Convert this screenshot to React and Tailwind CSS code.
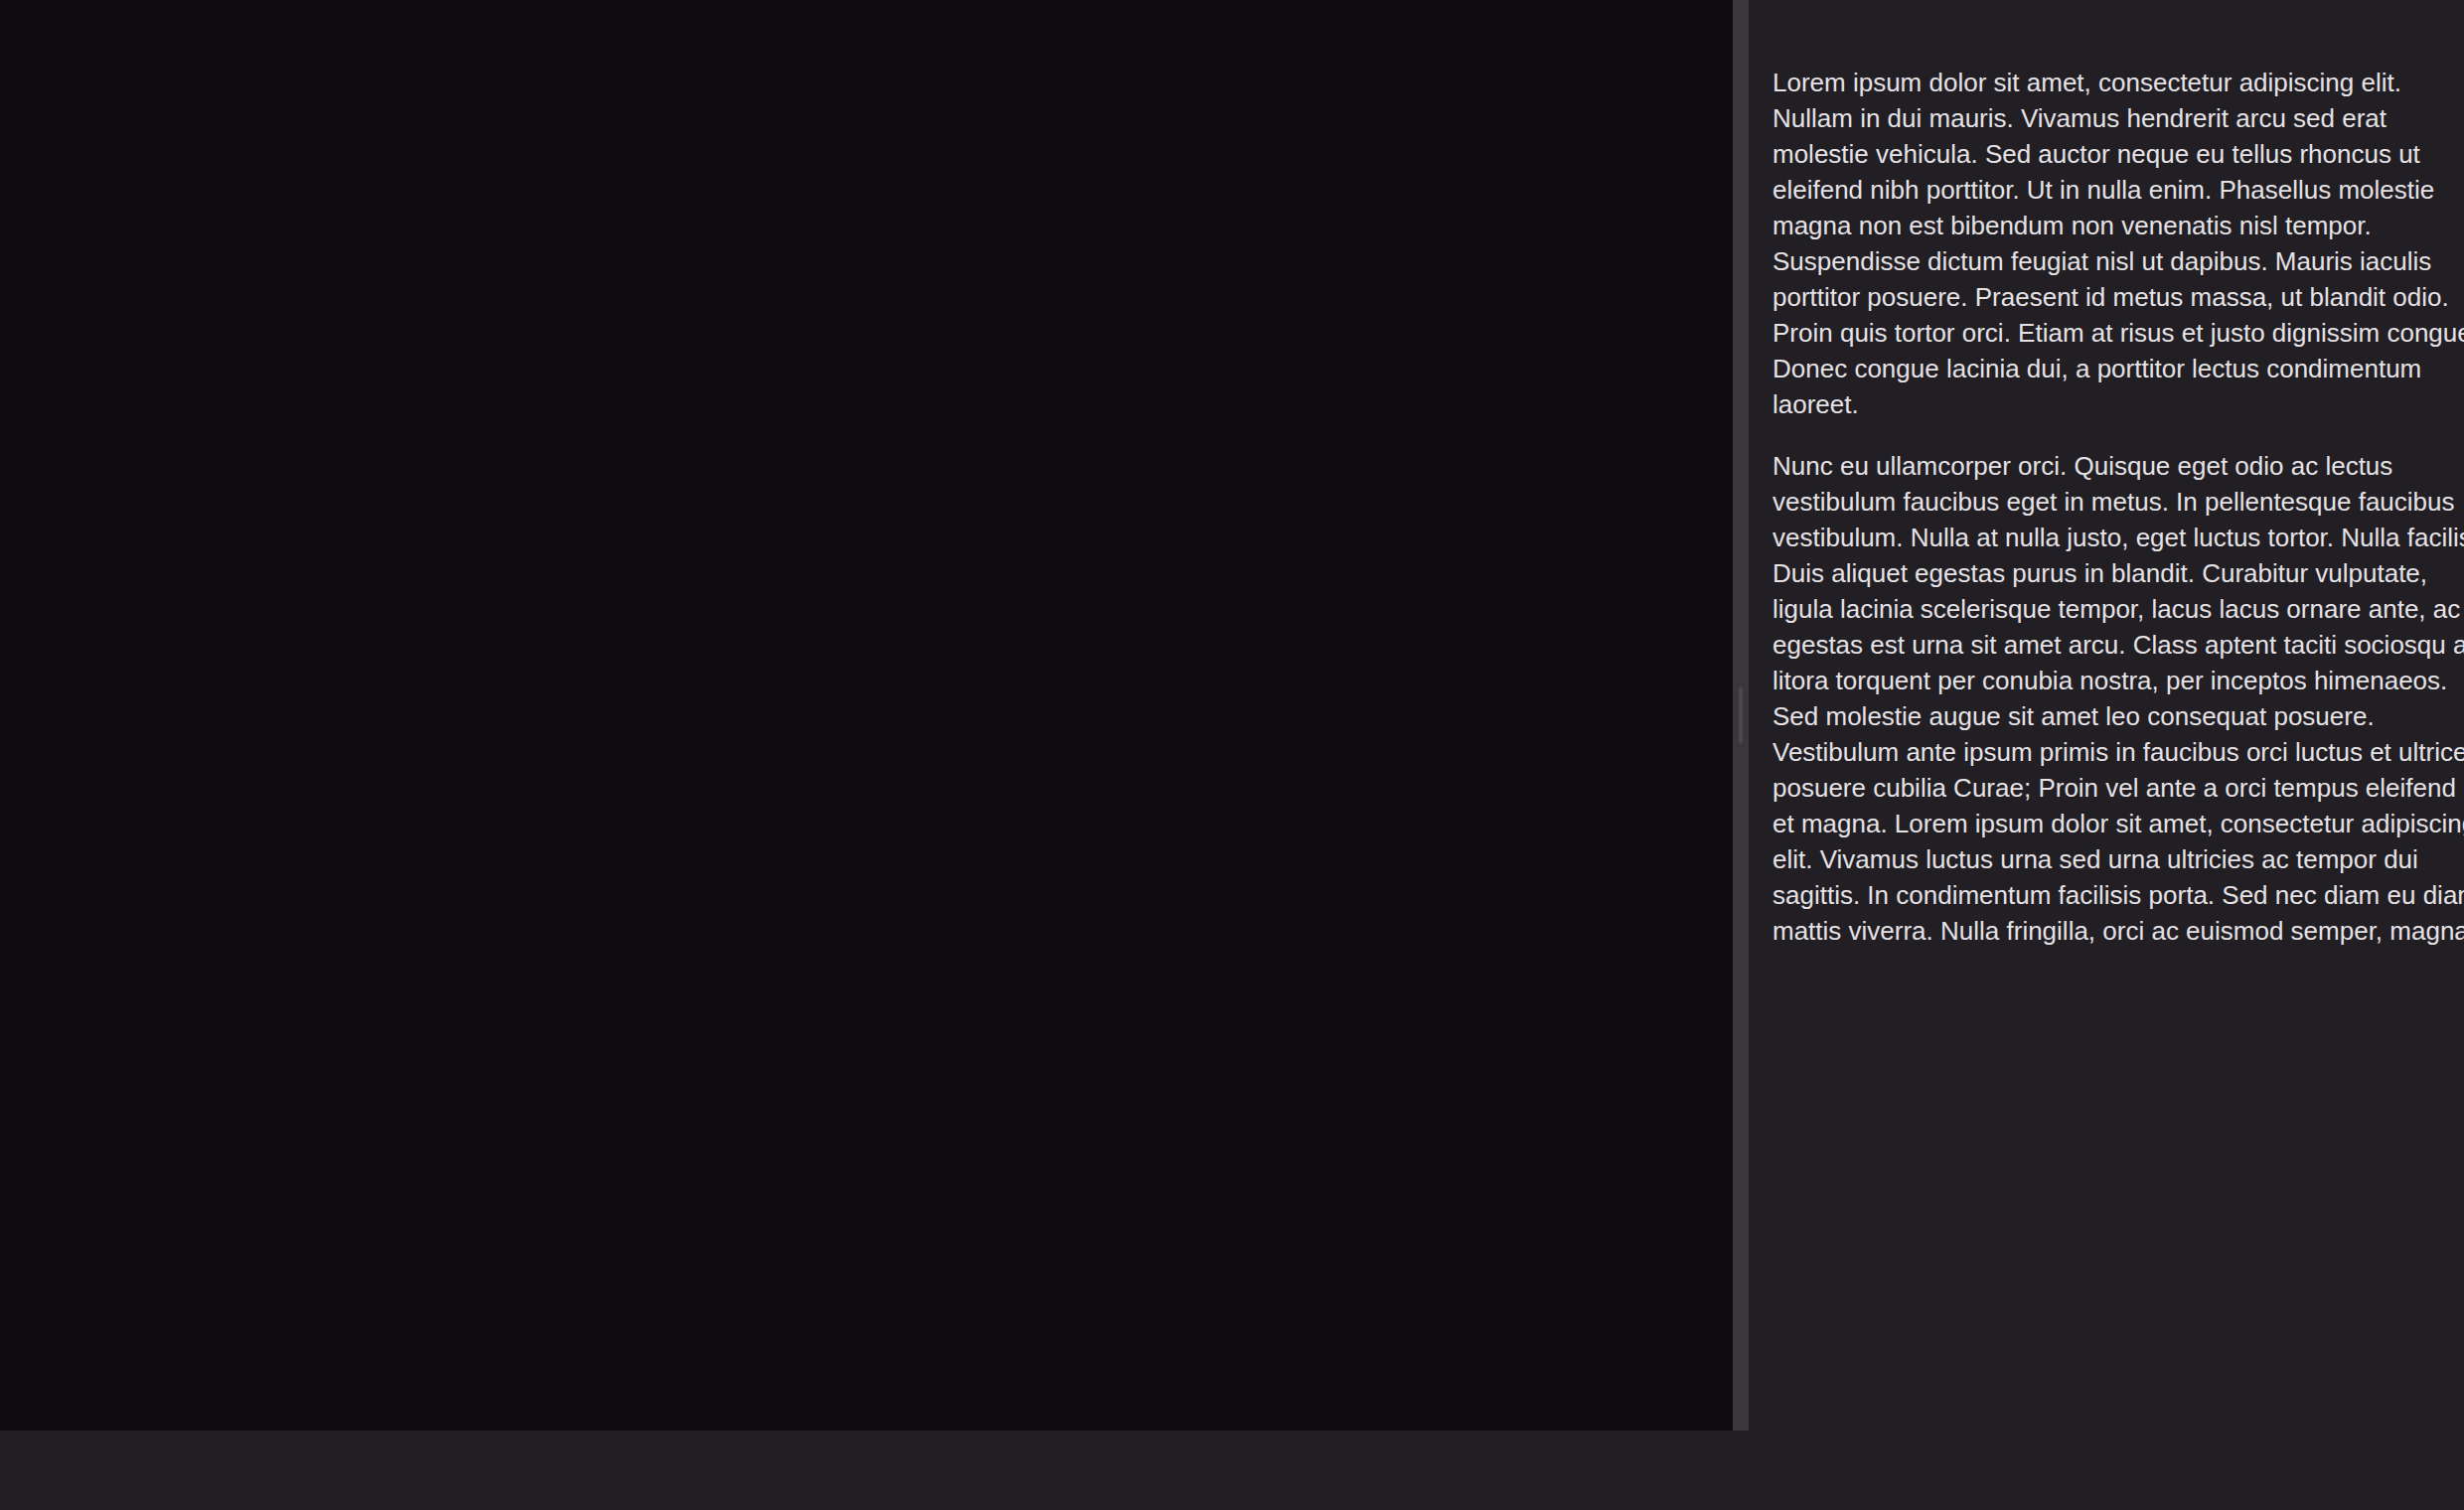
export default function App() {
  const p1 =
    "Lorem ipsum dolor sit amet, consectetur adipiscing elit. Nullam in dui mauris. Vivamus hendrerit arcu sed erat molestie vehicula. Sed auctor neque eu tellus rhoncus ut eleifend nibh porttitor. Ut in nulla enim. Phasellus molestie magna non est bibendum non venenatis nisl tempor. Suspendisse dictum feugiat nisl ut dapibus. Mauris iaculis porttitor posuere. Praesent id metus massa, ut blandit odio. Proin quis tortor orci. Etiam at risus et justo dignissim congue. Donec congue lacinia dui, a porttitor lectus condimentum laoreet.";
  const p2 =
    "Nunc eu ullamcorper orci. Quisque eget odio ac lectus vestibulum faucibus eget in metus. In pellentesque faucibus vestibulum. Nulla at nulla justo, eget luctus tortor. Nulla facilisi. Duis aliquet egestas purus in blandit. Curabitur vulputate, ligula lacinia scelerisque tempor, lacus lacus ornare ante, ac egestas est urna sit amet arcu. Class aptent taciti sociosqu ad litora torquent per conubia nostra, per inceptos himenaeos. Sed molestie augue sit amet leo consequat posuere. Vestibulum ante ipsum primis in faucibus orci luctus et ultrices posuere cubilia Curae; Proin vel ante a orci tempus eleifend ut et magna. Lorem ipsum dolor sit amet, consectetur adipiscing elit. Vivamus luctus urna sed urna ultricies ac tempor dui sagittis. In condimentum facilisis porta. Sed nec diam eu diam mattis viverra. Nulla fringilla, orci ac euismod semper, magna.";
  return (
    <div className="flex h-[1520px] w-[2480px] flex-col overflow-hidden bg-[#221f24] font-['Liberation_Sans',Arial,sans-serif]">
      <div className="flex h-[1440px] w-full">
        <div className="h-full w-[1744px] shrink-0 bg-[#0d0b0e]" />
        <div className="flex h-full w-4 shrink-0 items-center justify-center bg-[#3a3639]">
          <div className="h-14 w-1 rounded-full bg-[#4c484b]" />
        </div>
        <div className="h-full min-w-0 flex-1 overflow-hidden bg-[#221f24] pl-6 pt-[65px]">
          <div className="flex w-[720px] flex-col gap-[26px] text-[26px] leading-[36px] text-[#e5e2e6]">
            <p>{p1}</p>
            <p>{p2}</p>
          </div>
        </div>
      </div>
      <div className="h-20 w-full bg-[#221f24]" />
    </div>
  );
}
